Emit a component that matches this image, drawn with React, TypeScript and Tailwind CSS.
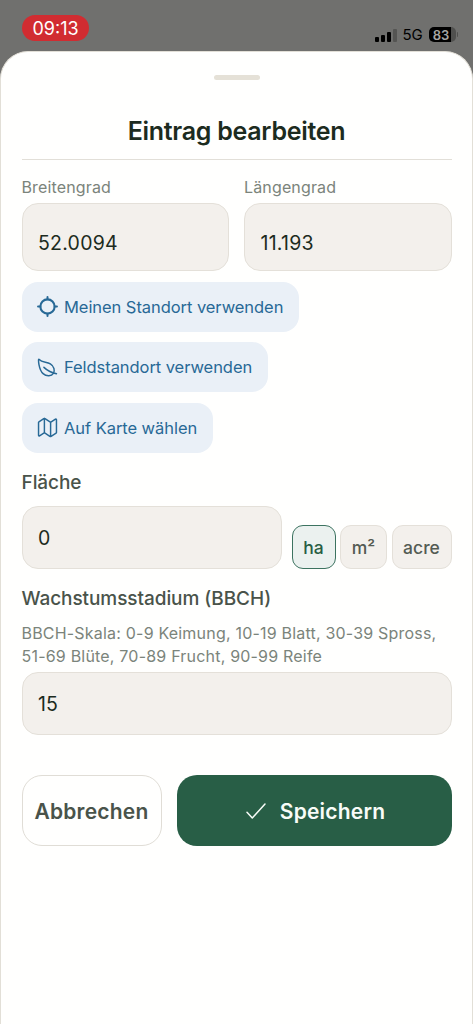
import type { ReactNode } from 'react';
import { IoLeafOutline, IoMapOutline } from 'react-icons/io5';

function LocateIcon() {
  return (
    <svg viewBox="0 0 20 20" className="size-[21px]" fill="none" stroke="currentColor" strokeLinecap="round">
      <circle cx="10" cy="10" r="6.8" strokeWidth="2" />
      <path d="M10 1v2.2M10 16.8V19M1 10h2.2M16.8 10H19" strokeWidth="1.9" />
    </svg>
  );
}

function StatusBar() {
  return (
    <div className="flex h-[51px] items-start justify-between pt-[15px] pr-[15px] pl-[22px]">
      <div className="flex h-[26px] w-[67px] items-center justify-center rounded-full bg-[#d12c31] text-[18px] text-white">
        09:13
      </div>
      <div className="mt-[12px] flex h-[15px] items-center text-black">
        <div className="flex h-[14px] items-end gap-[2px]">
          <span className="h-[5px] w-[4px] rounded-[1px] bg-black" />
          <span className="h-[7px] w-[4px] rounded-[1px] bg-black" />
          <span className="h-[10px] w-[4px] rounded-[1px] bg-black" />
          <span className="h-[13px] w-[4px] rounded-[1px] bg-[#555553]" />
        </div>
        <span className="ml-[6px] w-[21px] text-[15px] leading-[15px] tracking-[-0.2px]">5G</span>
        <div className="ml-[5px] flex h-[15px] w-[27px] items-center justify-center rounded-[5px] bg-linear-to-r from-black from-80% to-[#50504e] to-80% pr-[2px] text-[13px] leading-[15px] font-semibold text-[#a5a5a3]">
          <span className="pt-px">83</span>
        </div>
        <span className="ml-px h-[5px] w-[1.5px] rounded-r-full bg-[#50504e]" />
      </div>
    </div>
  );
}

function Field({ value, className }: { value: string; className: string }) {
  return (
    <div className={`flex items-center rounded-[16px] border-[1.5px] border-[#e4e0d9] bg-[#f3f0ec] pl-[15.5px] text-[19.5px] text-[#1c2b20] ${className}`}>
      {value}
    </div>
  );
}

function LocationButton({ icon, label, className }: { icon: ReactNode; label: string; className: string }) {
  return (
    <button className={`flex h-[50px] items-center gap-[6px] rounded-[16px] bg-[#eaf0f7] pl-[15.5px] text-[16.5px] tracking-[-0.06px] whitespace-nowrap text-[#286996] ${className}`}>
      {icon}
      <span className="pt-px">{label}</span>
    </button>
  );
}

export default function App() {
  return (
    <div className="flex h-[1024px] w-[473px] flex-col overflow-hidden bg-[#70706e] font-['Inter',sans-serif]">
      <StatusBar />
      <main className="flex flex-1 flex-col rounded-t-[28px] border border-b-0 border-[#e2dfd7] bg-[#fffffe] px-[20.5px]">
        <div className="mt-[23px] h-[5px] w-[46px] self-center rounded-full bg-[#e5e1d7]" />
        <h1 className="mt-[35px] text-center text-[25px] leading-[32px] font-semibold tracking-[-0.28px] text-[#1c2b20]">
          Eintrag bearbeiten
        </h1>
        <hr className="mt-[12px] border-t-[1.5px] border-[#e2dfd8]" />

        <div className="mt-[17px] grid grid-cols-2 gap-[15px]">
          <label className="flex flex-col text-[16px] leading-[20px] tracking-[0.15px] text-[#7b847b]">
            Breitengrad
            <Field value="52.0094" className="mt-[6px] h-[68px] pt-[12px] tracking-[0.25px]" />
          </label>
          <label className="flex flex-col text-[16px] leading-[20px] tracking-[0.15px] text-[#7b847b]">
            Längengrad
            <Field value="11.193" className="mt-[6px] h-[68px] pt-[12px] tracking-[0.25px]" />
          </label>
        </div>

        <div className="mt-[10.5px] flex flex-col items-start gap-[10.5px]">
          <LocationButton icon={<LocateIcon />} label="Meinen Standort verwenden" className="w-[277px]" />
          <LocationButton icon={<IoLeafOutline className="size-[21px] scale-105 [&_path]:[stroke-width:34px]" />} label="Feldstandort verwenden" className="w-[246px]" />
          <LocationButton icon={<IoMapOutline className="size-[21px] scale-105 [&_path]:[stroke-width:34px]" />} label="Auf Karte wählen" className="w-[191px]" />
        </div>

        <h2 className="mt-[18.5px] text-[19px] leading-[24px] font-medium tracking-[-0.06px] text-[#49534a]">Fläche</h2>
        <div className="mt-[10.5px] flex items-end">
          <Field value="0" className="h-[63px] w-[260px] pt-[3px]" />
          <div className="ml-[10px] flex flex-1 justify-between text-[17.5px] font-medium text-[#535b53]">
            <button className="h-[44px] w-[44px] rounded-[11px] border-[1.5px] border-[#3c7360] bg-[#ebf1ef] pt-[3px] text-[#285e45]">ha</button>
            <button className="h-[44px] w-[46.5px] rounded-[11px] border-[1.5px] border-[#e4e0d9] bg-[#f3f0ec] pt-[3px]">m²</button>
            <button className="h-[44px] w-[60px] rounded-[11px] border-[1.5px] border-[#e4e0d9] bg-[#f3f0ec] pt-[3px]">acre</button>
          </div>
        </div>

        <h2 className="mt-[18px] text-[19px] leading-[24px] font-medium tracking-[-0.07px] text-[#49534a]">Wachstumsstadium (BBCH)</h2>
        <p className="mt-[11px] text-[16px] leading-[23px] tracking-[0.2px] whitespace-nowrap text-[#7b847b]">
          BBCH-Skala: 0-9 Keimung, 10-19 Blatt, 30-39 Spross,
          <br />
          51-69 Blüte, 70-89 Frucht, 90-99 Reife
        </p>
        <Field value="15" className="mt-[4px] h-[63px] pt-[4px]" />

        <div className="mt-[40.5px] flex gap-[15px] text-[21px] font-semibold tracking-[0.2px]">
          <button className="h-[71px] w-[140px] rounded-[20px] border-[1.5px] border-[#e0ddd6] pt-[2px] text-[#49534a]">Abbrechen</button>
          <button className="flex h-[71px] flex-1 items-center justify-center gap-[14px] rounded-[20px] bg-[#285e46] pt-[2px] pl-[3px] text-[#f8fcf8]">
            <svg viewBox="0 0 20 16" className="mb-[2px] h-[16px] w-[20px]" fill="none" stroke="currentColor" strokeWidth="1.5" strokeLinecap="round" strokeLinejoin="round">
              <path d="M1 9.3 6.3 15 19 1" />
            </svg>
            <span>Speichern</span>
          </button>
        </div>
      </main>
    </div>
  );
}
